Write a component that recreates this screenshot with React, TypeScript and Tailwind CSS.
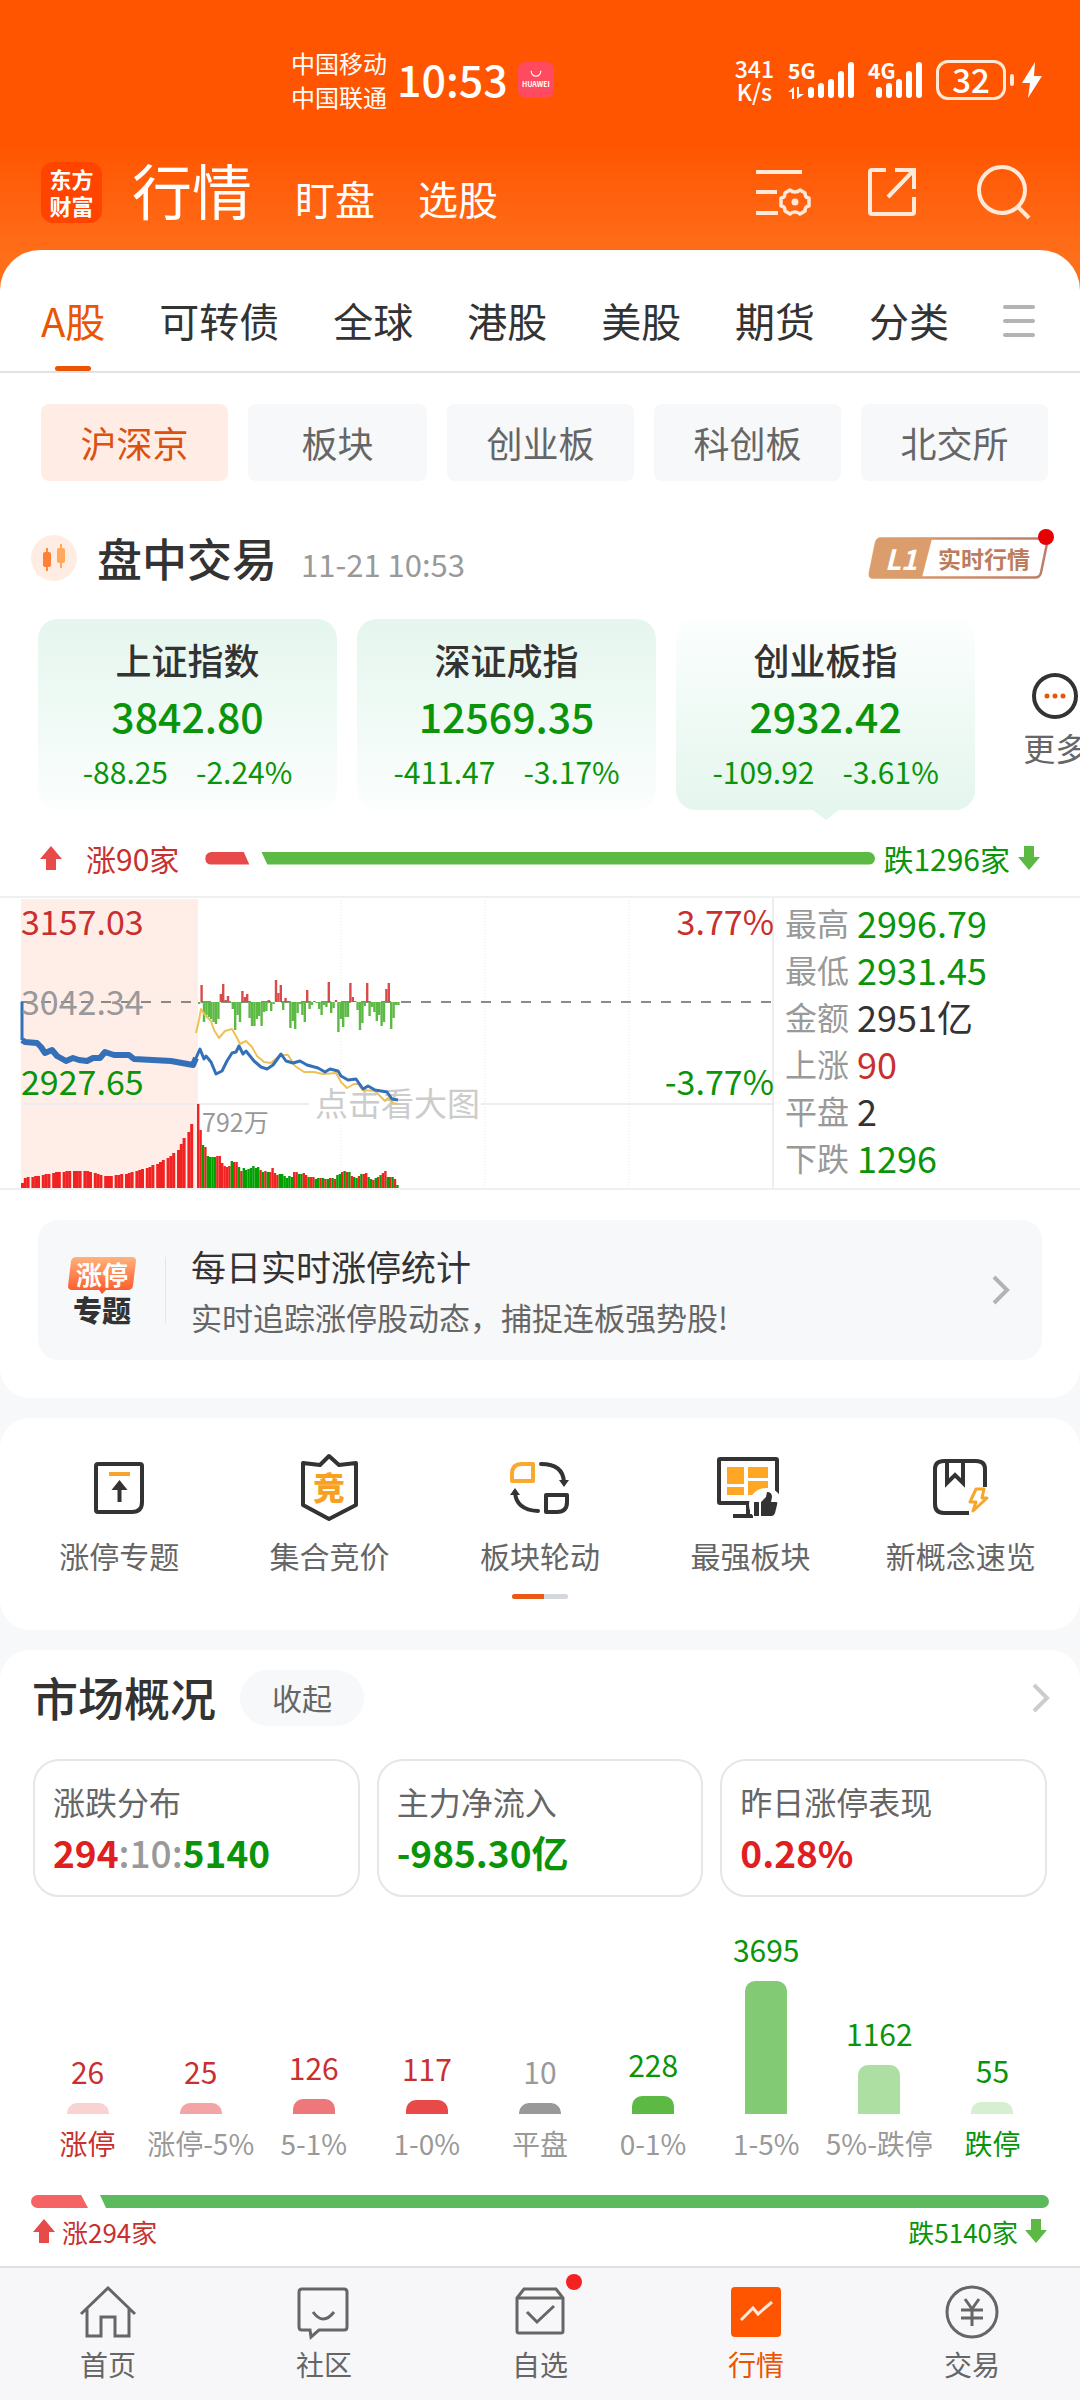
import { useState } from "react";
import type { ReactNode } from "react";
import clsx from "clsx";

const MARKET_TABS = ["A股", "可转债", "全球", "港股", "美股", "期货", "分类"];
const BOARD_CHIPS = ["沪深京", "板块", "创业板", "科创板", "北交所"];

const INDEXES = [
  { name: "上证指数", value: "3842.80", change: "-88.25", percent: "-2.24%" },
  { name: "深证成指", value: "12569.35", change: "-411.47", percent: "-3.17%" },
  { name: "创业板指", value: "2932.42", change: "-109.92", percent: "-3.61%" },
];

const QUOTE_STATS = [
  { label: "最高", value: "2996.79", color: "text-[#0a940a]" },
  { label: "最低", value: "2931.45", color: "text-[#0a940a]" },
  { label: "金额", value: "2951亿", color: "text-[#333]" },
  { label: "上涨", value: "90", color: "text-[#c92f2f]" },
  { label: "平盘", value: "2", color: "text-[#333]" },
  { label: "下跌", value: "1296", color: "text-[#0a940a]" },
];

const DISTRIBUTION = [
  { label: "涨停", count: 26, height: 11, bar: "bg-[#f9d2d2]", text: "text-[#c92f2f]", labelText: "text-[#c92f2f]" },
  { label: "涨停-5%", count: 25, height: 11, bar: "bg-[#f3a5a6]", text: "text-[#c92f2f]", labelText: "text-[#999]" },
  { label: "5-1%", count: 126, height: 15, bar: "bg-[#ee7879]", text: "text-[#c92f2f]", labelText: "text-[#999]" },
  { label: "1-0%", count: 117, height: 14, bar: "bg-[#e84a4a]", text: "text-[#c92f2f]", labelText: "text-[#999]" },
  { label: "平盘", count: 10, height: 11, bar: "bg-[#999]", text: "text-[#999]", labelText: "text-[#999]" },
  { label: "0-1%", count: 228, height: 18, bar: "bg-[#5cb944]", text: "text-[#0a940a]", labelText: "text-[#999]" },
  { label: "1-5%", count: 3695, height: 133, bar: "bg-[#83ca74]", text: "text-[#0a940a]", labelText: "text-[#999]" },
  { label: "5%-跌停", count: 1162, height: 49, bar: "bg-[#addea2]", text: "text-[#0a940a]", labelText: "text-[#999]" },
  { label: "跌停", count: 55, height: 12, bar: "bg-[#d6efd1]", text: "text-[#0a940a]", labelText: "text-[#0a940a]" },
];

// call auction volume, three ticks per group
const AUCTION_VOLUME = [
  5, 10, 11, 11, 12, 12, 13, 14, 14, 15, 16, 16, 16, 17, 17, 17, 17, 17, 17, 17, 16, 15, 14,
  13, 12, 12, 12, 13, 13, 14, 14, 15, 16, 17, 18, 19, 20, 21, 23, 24, 26, 28, 30, 32, 35, 38, 44, 50, 56, 64,
];

// per-minute volume since the open, negative = closed down
const MINUTE_VOLUME = [
  84, 58, -43, 41, -32, -31, -31, -31, 32, 32, 25, 22, 21, 22, -27, 26, 26, -21, 17, -20, -18, -19, -20, -22,
  -20, -21, 18, -16, 17, -16, 16, 20, 15, 13, -14, -14, -12, -10, -12, -11, 16, 16, -14, -14, 15, 13, -11, 11,
  11, -9, -10, 10, -10, 9, -9, 10, -10, 9, -13, -14, 16, -17, 16, -16, 12, -11, -10, 12, -14, 14, 15, -11,
  -9, 8, -10, 11, -13, 15, 17, -11, 11, -11, 9, -3,
];

// net buying per minute
const NET_FLOW = [
  -2, 17, -20, -13, -15, -17, -20, -22, -17, 8, 18, 2, 6, -1, -7, -28, -13, -20, 11, 5, 8, -16, -24, -24, -17,
  -14, -24, -10, -9, 2, -9, -2, 22, 9, 17, -8, 4, 1, -26, -19, -27, -11, -2, -13, -20, 12, -7, -3, 1, -1, -7,
  -13, -3, -5, 20, -11, -6, 2, -30, -17, -25, -15, -15, 19, 5, 1, -8, -28, -21, -4, 19, -14, -5, -10, -19, -13,
  -24, -20, 13, 19, -27, -16, -3, -3,
];

const AUCTION_LINE =
  "1,142 4,144 16,145 20,149 24,155 31,152 36,158 45,163 52,160 58,162 66,163 72,160 79,160 84,154 93,157 108,157 113,161 150,163 172,167 175,160";
const PRICE_LINE =
  "172,167 175,160 179,151 183,161 185,158 190,164 195,176 201,173 206,163 211,155 215,154 218,148 222,156 225,153 233,163 240,169 246,171 252,167 260,156 265,163 272,165 279,163 286,167 297,170 304,174 309,171 317,173 320,178 327,182 335,181 342,191 347,188 354,192 366,194 371,201 377,202";
const AVERAGE_LINE =
  "175,135 178,122 180,111 184,117 190,123 193,132 198,140 204,133 211,131 215,138 219,146 225,143 231,149 236,158 243,164 250,165 259,157 267,157 274,168 283,174 293,174 302,176 315,175 320,184 326,190 333,186 337,186 342,192 354,193 359,198 364,203 368,199 371,205 377,206";

function StatusBar() {
  return (
    <div className="flex h-40 items-center justify-between pr-[38px] pl-[291px] text-white">
      <div className="flex items-center">
        <div className="text-[24px] leading-[34px]">
          <p>中国移动</p>
          <p>中国联通</p>
        </div>
        <span className="ml-[10px] pb-1 text-[43px] leading-none font-medium">10:53</span>
        <div className="ml-[10px] flex h-9 w-9 flex-col items-center justify-center rounded-lg bg-[#ff4a60]">
          <svg viewBox="0 0 16 10" className="h-2 w-4" fill="none" stroke="#fff" strokeWidth="1.5">
            <path d="M2 1c0 9 12 9 12 0" />
          </svg>
          <span className="text-[7px] leading-[12px] font-bold">HUAWEI</span>
        </div>
      </div>
      <div className="flex items-center">
        <div className="text-center text-[23px] leading-[23px] font-medium">
          <p>341</p>
          <p>K/s</p>
        </div>
        <svg viewBox="0 0 66 38" className="ml-[14px] h-[38px] w-[66px] overflow-visible" fill="#fff">
          <text x="0" y="18" fontSize="21" fontWeight="700">5G</text>
          <path d="M0 31l6-5v12H4v-7zM9 26h2v7h5l-7 5z" />
          <rect x="20" y="26" width="6" height="11" rx="3" />
          <rect x="30" y="22" width="6" height="15" rx="3" />
          <rect x="40" y="18" width="6" height="19" rx="3" />
          <rect x="50" y="10" width="6" height="27" rx="3" />
          <rect x="60" y="1" width="6" height="36" rx="3" />
        </svg>
        <svg viewBox="0 0 54 38" className="ml-[14px] h-[38px] w-[54px] overflow-visible" fill="#fff">
          <text x="0" y="18" fontSize="21" fontWeight="700">4G</text>
          <rect x="8" y="26" width="6" height="11" rx="3" />
          <rect x="18" y="22" width="6" height="15" rx="3" />
          <rect x="28" y="18" width="6" height="19" rx="3" />
          <rect x="38" y="10" width="6" height="27" rx="3" />
          <rect x="48" y="1" width="6" height="36" rx="3" />
        </svg>
        <div className="ml-[14px] flex h-10 w-[70px] items-center justify-center rounded-xl border-3 border-[#ffe9d6] pb-[2px] text-[33px] leading-none font-medium">
          32
        </div>
        <div className="ml-1 h-3 w-1 rounded-sm bg-[#ffe9d6]" />
        <svg viewBox="0 0 20 36" className="ml-2 h-9 w-5" fill="#fff">
          <path d="M13 0L0 21h8L6 36 20 14h-8z" />
        </svg>
      </div>
    </div>
  );
}

function TitleBar() {
  return (
    <div className="flex h-16 items-center justify-between pr-12 pl-[41px] text-white">
      <div className="flex items-center">
        <div className="flex h-[61px] w-[61px] flex-col items-center justify-center rounded-xl bg-[#ff4400] text-[22px] leading-[27px] font-bold">
          <span>东方</span>
          <span>财富</span>
        </div>
        <div className="ml-[30px] flex items-baseline gap-[43px] pb-[6px] leading-none">
          <h1 className="text-[60px] leading-[64px]">行情</h1>
          <button className="text-[40px]">盯盘</button>
          <button className="text-[40px]">选股</button>
        </div>
      </div>
      <div className="flex items-center gap-14 text-[#ffe9d9]">
        <button aria-label="设置列表">
          <svg viewBox="0 0 56 56" className="h-14 w-14 overflow-visible" fill="none" stroke="currentColor" strokeWidth="4">
            <path d="M4 8h46M4 28h21M4 49h22" />
            <path
              d="M43 28q3 0 5-2l5 3q0 5 4 5v8q-4 0-4 5l-5 3q-2-2-5-2t-5 2l-5-3q0-5-4-5v-8q4 0 4-5l5-3q2 2 5 2z"
              strokeLinejoin="round"
              strokeWidth="3.5"
            />
            <circle cx="43" cy="38" r="3.5" fill="currentColor" stroke="none" />
          </svg>
        </button>
        <button aria-label="分享">
          <svg viewBox="0 0 56 56" className="h-14 w-14" fill="none" stroke="currentColor" strokeWidth="4">
            <path d="M22 6H8q-2 0-2 2v40q0 2 2 2h40q2 0 2-2V33" />
            <path d="M31 6h19v19M50 6L24 33" />
          </svg>
        </button>
        <button aria-label="搜索">
          <svg viewBox="0 0 56 56" className="h-14 w-14" fill="none" stroke="currentColor" strokeWidth="4">
            <circle cx="26" cy="26" r="23" />
            <path d="M41 42l12 12" />
          </svg>
        </button>
      </div>
    </div>
  );
}

function MarketTabs() {
  const [active, setActive] = useState("A股");
  return (
    <nav className="flex h-[123px] items-stretch justify-between border-b-2 border-[#e0e2e5] pr-[45px] pl-[41px]">
      {MARKET_TABS.map((tab) => (
        <button
          key={tab}
          onClick={() => setActive(tab)}
          className={clsx(
            "relative pt-[18px] text-[40px]",
            tab === active ? "text-[#ea5504]" : "text-[#333]"
          )}
        >
          {tab}
          {tab === active && (
            <span className="absolute bottom-0 left-1/2 h-[5px] w-9 -translate-x-1/2 rounded-full bg-[#ea5504]" />
          )}
        </button>
      ))}
      <button aria-label="更多分类" className="flex flex-col justify-center gap-[10px] pt-5">
        <span className="h-[4px] w-8 rounded-full bg-[#b3b3b3]" />
        <span className="h-[4px] w-8 rounded-full bg-[#b3b3b3]" />
        <span className="h-[4px] w-8 rounded-full bg-[#b3b3b3]" />
      </button>
    </nav>
  );
}

function BoardChips() {
  const [active, setActive] = useState("沪深京");
  return (
    <div className="mt-[31px] grid grid-cols-[187fr_179fr_187fr_187fr_187fr] gap-5 pr-8 pl-[41px]">
      {BOARD_CHIPS.map((chip) => (
        <button
          key={chip}
          onClick={() => setActive(chip)}
          className={clsx(
            "h-[77px] rounded-lg pb-[2px] text-[36px]",
            chip === active ? "bg-[#ffede5] text-[#d9520f]" : "bg-[#f7f8fa] text-[#666]"
          )}
        >
          {chip}
        </button>
      ))}
    </div>
  );
}

function SessionHeader() {
  return (
    <div className="mt-[45px] flex h-16 items-center justify-between pr-[30px] pl-[31px]">
      <div className="flex items-center">
        <svg viewBox="0 0 46 46" className="h-[46px] w-[46px]">
          <circle cx="23" cy="23" r="23" fill="#ffede3" />
          <path d="M16 13v23" stroke="#ff8a3c" strokeWidth="2" />
          <path d="M30 9v24" stroke="#ffa95c" strokeWidth="2" />
          <rect x="12" y="17" width="8" height="15" rx="2" fill="#ff8136" />
          <rect x="26" y="13" width="8" height="15" rx="2" fill="#ffa95c" />
        </svg>
        <div className="ml-5 flex items-baseline gap-6">
          <h2 className="text-[45px] leading-[64px] font-medium text-[#333]">盘中交易</h2>
          <time className="text-[31px] text-[#999]">11-21 10:53</time>
        </div>
      </div>
      <button className="relative flex h-[42px] w-[182px] items-center">
        <svg viewBox="0 0 182 42" className="absolute inset-0 h-full w-full">
          <defs>
            <linearGradient id="l1" x1="0" x2="1">
              <stop offset="0" stopColor="#e0a06c" />
              <stop offset="1" stopColor="#bd7c68" />
            </linearGradient>
          </defs>
          <path d="M13 1.5h162q5 0 4 5l-6 29q-1 5-6 5H5q-4 0-3-5L8 6q1-4.5 5-4.5z" fill="#fff" stroke="url(#l1)" strokeWidth="2.5" />
          <path d="M13 1.5h51L54 40.5H5q-4 0-3-5L8 6q1-4.5 5-4.5z" fill="#dc9d6c" />
        </svg>
        <span className="relative w-[66px] text-center text-[28px] leading-none font-bold text-white italic">L1</span>
        <span className="relative ml-1 text-[23px] leading-none font-bold text-[#bd7c5e]">实时行情</span>
        <span className="absolute -top-2 -right-1 h-4 w-4 rounded-full bg-[#e60000]" />
      </button>
    </div>
  );
}

function IndexCards() {
  return (
    <div className="mt-[29px] flex gap-5 overflow-hidden pl-[38px]">
      {INDEXES.map((index, i) => {
        const selected = i === 2;
        return (
          <button key={index.name} className="w-[28.7%] shrink-0">
            <div
              className={clsx(
                "flex h-[191px] flex-col items-center rounded-[20px] pt-4",
                selected ? "bg-linear-to-b from-[#fbfefd] to-[#e5f6ee]" : "bg-linear-to-b from-[#e5f6ee] to-[#fbfefd]"
              )}
            >
              <span className="text-[36px] leading-[48px] font-medium text-[#333]">{index.name}</span>
              <span className="mt-[6px] text-[41px] leading-[52px] font-medium text-[#0a940a]">{index.value}</span>
              <span className="mt-[6px] flex gap-7 text-[30px] leading-[48px] text-[#0a940a]">
                <span>{index.change}</span>
                <span>{index.percent}</span>
              </span>
            </div>
            <svg viewBox="0 0 26 10" className="mx-auto h-[10px] w-[26px]">
              {selected && <path d="M0 0h26L13 10z" fill="#e5f6ee" />}
            </svg>
          </button>
        );
      })}
      <button className="ml-7 flex w-16 shrink-0 flex-col items-center pt-[54px]">
        <svg viewBox="0 0 46 46" className="h-[46px] w-[46px]">
          <circle cx="23" cy="23" r="21" fill="none" stroke="#333" strokeWidth="4" />
          <circle cx="15" cy="23" r="2.5" fill="#ea5504" />
          <circle cx="23" cy="23" r="2.5" fill="#ea5504" />
          <circle cx="31" cy="23" r="2.5" fill="#ea5504" />
        </svg>
        <span className="mt-[6px] text-[32px] leading-[44px] text-[#666]">更多</span>
      </button>
    </div>
  );
}

function Arrow({ down, className }: { down?: boolean; className?: string }) {
  return (
    <svg viewBox="0 0 22 24" className={clsx("h-6 w-[22px] shrink-0", className)}>
      {down ? (
        <path d="M6 0h10v11h6L11 24 0 11h6z" fill="#5cb944" />
      ) : (
        <path d="M11 0l11 13h-6v11H6V13H0z" fill="#e84a4a" />
      )}
    </svg>
  );
}

function BreadthRow() {
  return (
    <div className="mt-[14px] flex h-12 items-center pr-10 pl-10 text-[30px]">
      <Arrow />
      <span className="ml-6 text-[#c92f2f]">涨90家</span>
      <div className="mr-2 ml-[26px] flex h-[13px] flex-1 gap-3">
        <div className="w-11 rounded-l-full bg-[#e84a4a] [clip-path:polygon(0_0,87%_0,100%_100%,0_100%)]" />
        <div className="flex-1 rounded-r-full bg-[#5cb944] [clip-path:polygon(0_0,100%_0,100%_100%,6px_100%)]" />
      </div>
      <span className="text-[#0a940a]">跌1296家</span>
      <Arrow down className="ml-2" />
    </div>
  );
}

function IntradayChart() {
  return (
    <svg viewBox="0 0 753 290" className="block min-w-0 flex-1 overflow-visible" fontSize="34">
      <rect x="0" y="1" width="177" height="289" fill="#ffede7" />
      <path d="M320 2v288M464 2v288M608 2v288" stroke="#e3e5e8" strokeDasharray="1 2" />
      <path d="M0 206h753" stroke="#ededed" strokeWidth="2" />
      <path d="M0 104h753" stroke="#8a8a8a" strokeWidth="2" strokeDasharray="10 10" />
      <path d="M752 0v290" stroke="#ededed" strokeWidth="2" />

      {AUCTION_VOLUME.map((v, i) => (
        <rect key={i} x={Math.floor(i / 3) * 10.4 + (i % 3) * 2.8} y={290 - v} width="3" height={v} fill="#f02222" />
      ))}
      {MINUTE_VOLUME.map((v, i) => (
        <rect
          key={i}
          x={176 + i * 2.4}
          y={290 - Math.abs(v)}
          width="2.4"
          height={Math.abs(v)}
          fill={v > 0 ? "#f02222" : "#00a000"}
        />
      ))}
      {NET_FLOW.map((v, i) => (
        <rect
          key={i}
          x={177 + i * 2.4}
          y={v > 0 ? 104 - v : 104}
          width="2.4"
          height={Math.abs(v)}
          fill={v > 0 ? "#d94b4b" : "#5cb944"}
        />
      ))}

      <rect x="288" y="190" width="172" height="36" fill="#fff" />
      <text x="294" y="218" fontSize="33" fill="#ccc">点击看大图</text>
      <polyline points={AVERAGE_LINE} fill="none" stroke="#eec158" strokeWidth="2" strokeLinejoin="round" />
      <path d="M1 104v38" stroke="#3470b8" strokeWidth="3" />
      <polyline points={AUCTION_LINE} fill="none" stroke="#3470b8" strokeWidth="6" strokeLinejoin="round" />
      <polyline points={PRICE_LINE} fill="none" stroke="#3470b8" strokeWidth="3" strokeLinejoin="round" />

      <text x="0" y="37" fill="#c92f2f">3157.03</text>
      <text x="0" y="117" fill="#999">3042.34</text>
      <text x="0" y="197" fill="#0a940a">2927.65</text>
      <text x="753" y="37" fill="#c92f2f" textAnchor="end">3.77%</text>
      <text x="753" y="197" fill="#0a940a" textAnchor="end">-3.77%</text>
      <text x="181" y="234" fontSize="25" fill="#999">792万</text>
    </svg>
  );
}

function QuotePanel() {
  return (
    <div className="mt-[14px] flex border-y-2 border-[#f0f0f0] pl-[21px]">
      <IntradayChart />
      <dl className="w-[306px] pl-[11px]">
        {QUOTE_STATS.map((stat) => (
          <div key={stat.label} className="flex h-[47px] items-center gap-2">
            <dt className="text-[32px] leading-none text-[#999]">{stat.label}</dt>
            <dd className={clsx("text-[36px] leading-none", stat.color)}>{stat.value}</dd>
          </div>
        ))}
      </dl>
    </div>
  );
}

function Chevron({ className }: { className?: string }) {
  return (
    <svg viewBox="0 0 18 30" className={clsx("h-[30px] w-[18px]", className)} fill="none" stroke="currentColor" strokeWidth="4">
      <path d="M2 2l13 13L2 28" />
    </svg>
  );
}

function PromoBanner() {
  return (
    <a href="#limit-up" className="mx-[38px] mt-[30px] flex h-[140px] items-center rounded-[20px] bg-[#f7f8fa] pr-8 pl-[30px]">
      <div className="flex w-[68px] flex-col items-center">
        <div className="relative flex h-[34px] w-[68px] items-center justify-center">
          <svg viewBox="0 0 68 38" className="absolute top-0 left-0 h-[38px] w-[68px]">
            <defs>
              <linearGradient id="promo" x1="0" y1="0" x2="0" y2="1">
                <stop offset="0" stopColor="#ffb27a" />
                <stop offset="1" stopColor="#fb5429" />
              </linearGradient>
            </defs>
            <path d="M8 0h56q4 0 4 4l-3 25q-1 4-5 4H38l-4 4-3-4H4q-4 0-4-4L3 4q1-4 5-4z" fill="url(#promo)" />
          </svg>
          <span className="relative text-[26px] leading-none font-bold text-white">涨停</span>
        </div>
        <span className="mt-1 text-[29px] leading-[28px] font-black text-[#333]">专题</span>
      </div>
      <div className="ml-[29px] h-[66px] w-px bg-[#e3e4e8]" />
      <div className="ml-[25px] flex-1 pt-1">
        <p className="text-[35px] leading-[50px] text-[#333]">每日实时涨停统计</p>
        <p className="text-[31px] leading-[52px] text-[#666]">实时追踪涨停股动态，捕捉连板强势股!</p>
      </div>
      <Chevron className="text-[#b3b3b3]" />
    </a>
  );
}

const TOOLS: { label: string; icon: ReactNode }[] = [
  {
    label: "涨停专题",
    icon: (
      <>
        <path d="M14 12h42q2 0 2 2v36q0 10-10 10H14q-2 0-2-2V14q0-2 2-2z" stroke="#333" />
        <path d="M25 22h21" stroke="#f5a52c" />
        <path d="M35.5 50V34" stroke="#333" />
        <path d="M35.5 28l8 10h-16z" fill="#333" />
      </>
    ),
  },
  {
    label: "集合竞价",
    icon: (
      <>
        <path d="M34 4L25 13 8 11v42l26 14 27-14V11l-17 2z" stroke="#333" strokeLinejoin="round" />
        <text x="34" y="48" textAnchor="middle" fontSize="32" fontWeight="900" fill="#f9a11e">竞</text>
      </>
    ),
  },
  {
    label: "板块轮动",
    icon: (
      <>
        <path d="M17 12h11v17H7V22q0-10 10-10z" stroke="#f9a92e" strokeLinejoin="round" />
        <path d="M41 43h21v7q0 10-10 10H41z" stroke="#333" strokeLinejoin="round" />
        <path d="M36 12q22 0 23 18M33 59Q11 58 10 40" stroke="#333" strokeLinecap="round" />
        <path d="M54 28h10l-5 7zM5 43h10l-5-7z" fill="#333" />
      </>
    ),
  },
  {
    label: "最强板块",
    icon: (
      <>
        <rect x="4" y="7" width="58" height="44" rx="1" stroke="#333" />
        <path d="M33 52v12M18 64h20" stroke="#333" />
        <path d="M12 15h17v17H12zM33 15h20v11H33zM12 35h17v8H12zM33 29h20v14H33z" fill="#ffa722" />
        <circle cx="51" cy="53" r="17" fill="#fff" />
        <path d="M39 50h5v14h-5zM46 50l5-5 1-5q5 0 5 5l-1 5h5q2 0 1 3l-2 8q-1 3-3 3H46z" fill="#333" />
      </>
    ),
  },
  {
    label: "新概念速览",
    icon: (
      <>
        <path d="M43 61H18q-9 0-9-9V17q0-8 9-8h32q9 0 9 8v18" stroke="#333" />
        <path d="M21 10v21l8-8 8 8V10" stroke="#333" />
        <path d="M50 37h8l-2 9h5L47 59l3-9h-6z" stroke="#f9a52c" strokeWidth="3" strokeLinejoin="round" />
      </>
    ),
  },
];

function ToolGrid() {
  return (
    <section className="mt-5 rounded-[30px] bg-white px-[14px] pt-[34px] pb-[31px]">
      <div className="grid grid-cols-5">
        {TOOLS.map((tool) => (
          <button key={tool.label} className="flex flex-col items-center whitespace-nowrap">
            <svg viewBox="0 0 70 70" className="h-[70px] w-[70px]" fill="none" strokeWidth="4">
              {tool.icon}
            </svg>
            <span className="mt-[11px] text-[30px] leading-[44px] text-[#666]">{tool.label}</span>
          </button>
        ))}
      </div>
      <div className="mx-auto mt-[17px] h-[5px] w-14 overflow-hidden rounded-full bg-[#d4d7dc]">
        <div className="h-full w-8 bg-[#ea5a14]" />
      </div>
    </section>
  );
}

function SummaryCard({ title, children }: { title: string; children: ReactNode }) {
  return (
    <button className="h-[138px] rounded-[26px] border-2 border-[#e6e6e8] pb-[3px] pl-[18px] text-left">
      <p className="text-[32px] leading-[48px] text-[#666]">{title}</p>
      <p className="mt-[3px] text-[37px] leading-[48px] font-bold">{children}</p>
    </button>
  );
}

function DistributionChart() {
  return (
    <div className="mt-[22px] grid grid-cols-9 px-[31px]">
      {DISTRIBUTION.map((bucket) => (
        <div key={bucket.label} className="flex h-[244px] flex-col items-center justify-end whitespace-nowrap">
          <span className={clsx("text-[30px] leading-[40px]", bucket.text)}>{bucket.count}</span>
          <div className={clsx("mt-3 w-[42px] rounded-t-[10px]", bucket.bar)} style={{ height: bucket.height }} />
          <span className={clsx("mt-[9px] text-[28px] leading-[40px]", bucket.labelText)}>{bucket.label}</span>
        </div>
      ))}
    </div>
  );
}

function MarketOverview() {
  return (
    <section className="mt-5 rounded-t-[30px] bg-white pt-5 pb-[15px]">
      <div className="flex items-center pr-[30px] pl-8">
        <h2 className="pb-[3px] text-[46px] leading-[53px] font-medium text-[#333]">市场概况</h2>
        <button className="ml-6 h-14 w-[124px] rounded-full bg-[#f7f8fa] pb-[2px] text-[30px] text-[#666]">收起</button>
        <Chevron className="ml-auto text-[#ccc]" />
      </div>
      <div className="mt-[33px] grid grid-cols-3 gap-[17px] px-[33px]">
        <SummaryCard title="涨跌分布">
          <span className="text-[#e02020]">294</span>
          <span className="font-medium text-[#999]">:10:</span>
          <span className="text-[#0a940a]">5140</span>
        </SummaryCard>
        <SummaryCard title="主力净流入">
          <span className="text-[#0a940a]">-985.30亿</span>
        </SummaryCard>
        <SummaryCard title="昨日涨停表现">
          <span className="text-[#e02020]">0.28%</span>
        </SummaryCard>
      </div>
      <DistributionChart />
      <div className="mx-[31px] mt-8 flex h-[13px] gap-3">
        <div className="w-[57px] rounded-l-full bg-[#f56464] [clip-path:polygon(0_0,88%_0,100%_100%,0_100%)]" />
        <div className="flex-1 rounded-r-full bg-[#5aba5c] [clip-path:polygon(0_0,100%_0,100%_100%,6px_100%)]" />
      </div>
      <div className="mt-[3px] flex h-10 items-center justify-between px-[33px] text-[26px]">
        <span className="flex items-center gap-[7px] text-[#c92f2f]">
          <Arrow />
          涨294家
        </span>
        <span className="flex items-center gap-[7px] text-[#0a940a]">
          跌5140家
          <Arrow down />
        </span>
      </div>
    </section>
  );
}

const NAV_ITEMS: { label: string; href: string; active?: boolean; badge?: boolean; icon: ReactNode }[] = [
  {
    label: "首页",
    href: "#home",
    icon: <path d="M2 30L29 4l27 26M8 25v27h14V33h14v19h14V25" />,
  },
  {
    label: "社区",
    href: "#community",
    icon: (
      <>
        <path d="M7 5h42q3 0 3 3v35q0 3-3 3H24l-8 7-1-7H7q-3 0-3-3V8q0-3 3-3z" />
        <path d="M18 28q10 14 21 0" />
      </>
    ),
  },
  {
    label: "自选",
    href: "#watchlist",
    badge: true,
    icon: (
      <>
        <path d="M6 14L13 5h32l7 9v33q0 2-2 2H8q-2 0-2-2zM6 14h46" />
        <path d="M16 28l10 10 17-16" />
      </>
    ),
  },
  {
    label: "行情",
    href: "#market",
    active: true,
    icon: (
      <>
        <rect x="4" y="3" width="50" height="50" rx="4" fill="#ff5500" stroke="none" />
        <path d="M14 36l12-12 5 6 14-12" stroke="#ffe9d9" />
      </>
    ),
  },
  {
    label: "交易",
    href: "#trade",
    icon: (
      <>
        <circle cx="29" cy="28" r="25" />
        <path d="M22 15l7 10 7-10M18 26h22M18 34h22M29 25v17" />
      </>
    ),
  },
];

function BottomNav() {
  return (
    <nav className="grid h-[134px] grid-cols-5 border-t-2 border-[#dfe0e4] bg-[#f7f7f9] pt-4">
      {NAV_ITEMS.map((item) => (
        <a
          key={item.label}
          href={item.href}
          className={clsx("flex flex-col items-center", item.active ? "text-[#ea5504]" : "text-[#666]")}
        >
          <span className="relative">
            <svg viewBox="0 0 58 58" className="h-[58px] w-[58px]" fill="none" stroke="currentColor" strokeWidth="3">
              {item.icon}
            </svg>
            {item.badge && <span className="absolute -top-[10px] -right-[13px] h-4 w-4 rounded-full bg-[#f52222]" />}
          </span>
          <span className="mt-[2px] text-[28px] leading-[40px]">{item.label}</span>
        </a>
      ))}
    </nav>
  );
}

export default function App() {
  return (
    <div className="min-h-screen overflow-x-hidden bg-[#f7f8fa] font-['Noto_Sans_CJK_SC',sans-serif]">
      <header className="bg-linear-to-b from-[#ff5500] from-50% to-[#ff6f1a] to-90% pb-[66px]">
        <StatusBar />
        <TitleBar />
      </header>
      <main>
        <section className="-mt-10 rounded-t-[40px] rounded-b-[30px] bg-white pb-[38px]">
          <MarketTabs />
          <BoardChips />
          <SessionHeader />
          <IndexCards />
          <BreadthRow />
          <QuotePanel />
          <PromoBanner />
        </section>
        <ToolGrid />
        <MarketOverview />
      </main>
      <BottomNav />
    </div>
  );
}
